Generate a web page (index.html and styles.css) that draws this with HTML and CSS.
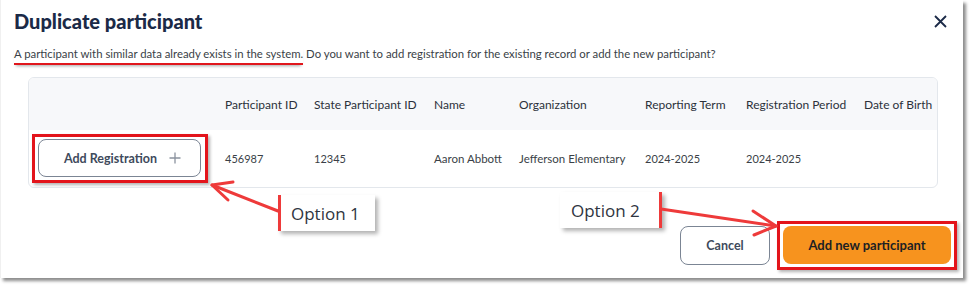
FILE: index.html
```html
<!DOCTYPE html>
<html lang="en">
<head>
  <meta charset="UTF-8" />
  <title>Duplicate participant</title>
  <link rel="stylesheet" href="styles.css">
</head>
<body>
  <div class="shot">
    <div class="dialog">
      <div class="dlg-head">
        <h1>Duplicate participant</h1>
        <button class="close" aria-label="Close">
          <svg width="13" height="13" viewBox="0 0 13 13"><path d="M1 1 L12 12 M12 1 L1 12" stroke="#1b2a47" stroke-width="1.8" fill="none"/></svg>
        </button>
      </div>
      <p class="msg"><span class="red-line">A participant with similar data already exists in the system.</span> Do you want to add registration for the existing record or add the new participant?</p>

      <div class="table-card">
        <table>
          <colgroup>
            <col class="c0"><col class="c1"><col class="c2"><col class="c3"><col class="c4"><col class="c5"><col class="c6"><col class="c7">
          </colgroup>
          <thead>
            <tr>
              <th></th>
              <th>Participant ID</th>
              <th>State Participant ID</th>
              <th>Name</th>
              <th>Organization</th>
              <th>Reporting Term</th>
              <th>Registration Period</th>
              <th>Date of Birth</th>
            </tr>
          </thead>
          <tbody>
            <tr>
              <td>
                <span class="mark-box">
                  <button class="btn btn-add">Add Registration
                    <svg class="plus" width="12" height="12" viewBox="0 0 12 12"><path d="M6 0.5 V11.5 M0.5 6 H11.5" stroke="#8a929e" stroke-width="1.3" fill="none"/></svg>
                  </button>
                </span>
              </td>
              <td class="num">456987</td>
              <td class="num">12345</td>
              <td>Aaron Abbott</td>
              <td>Jefferson Elementary</td>
              <td class="num">2024-2025</td>
              <td class="num">2024-2025</td>
              <td></td>
            </tr>
          </tbody>
        </table>
      </div>

      <div class="actions">
        <button class="btn btn-cancel">Cancel</button>
        <span class="mark-box mark-primary">
          <button class="btn btn-primary">Add new participant</button>
        </span>
      </div>
    </div>

    <div class="callout callout-1">Option 1</div>
    <div class="callout callout-2">Option 2</div>

    <svg class="arrows" width="972" height="287" viewBox="0 0 972 287">
      <g stroke="#ee3a3a" stroke-width="3" fill="none" stroke-linecap="round" stroke-linejoin="round">
        <path d="M278 211 L212 185"/>
        <path d="M233 182 L212 185 L228 200"/>
        <path d="M661 209 L776 226"/>
        <path d="M753 211 L776 226 L754 235"/>
      </g>
    </svg>
  </div>
</body>
</html>
```

FILE: styles.css
```css
* {
  box-sizing: border-box;
}

body {
  margin: 0;
  background: #fff;
  font-family: 'Lato', 'Open Sans', sans-serif;
  color: #333b47;
}

.shot {
  position: relative;
  width: 972px;
  height: 287px;
}

.dialog {
  width: 963px;
  height: 278px;
  padding: 0 12px 0 13px;
  background: #fff;
  border-left: 1px solid #f0f0f0;
  box-shadow: 3px 3px 3px rgba(0, 0, 0, 0.45);
  display: flex;
  flex-direction: column;
}

.dlg-head {
  display: flex;
  justify-content: space-between;
  align-items: center;
  height: 42px;
}

h1 {
  margin: 0;
  font-size: 20px;
  font-weight: 900;
  color: #1b2a47;
}

.close {
  background: none;
  border: none;
  padding: 0;
  margin-right: 4px;
  display: flex;
}

.msg {
  margin: 4px 0 0;
  font-size: 11.35px;
  line-height: 16px;
  color: #3a3f47;
}

.red-line {
  display: inline-block;
  border-bottom: 2px solid #e0161c;
  padding-bottom: 1px;
  box-shadow: 0 3px 3px -2px rgba(0, 0, 0, 0.35);
}

.table-card {
  margin: 12px 13px 0 14px;
  border: 1px solid #e3e7ec;
  border-radius: 6px;
  overflow: hidden;
}

table {
  width: 100%;
  border-collapse: collapse;
  table-layout: fixed;
  font-size: 11.5px;
}

.c0 { width: 186px; }
.c1 { width: 89px; }
.c2 { width: 120px; }
.c3 { width: 85px; }
.c4 { width: 126px; }
.c5 { width: 101px; }
.c6 { width: 118px; }

th {
  background: #f7f8fa;
  height: 52px;
  padding: 0 10px;
  text-align: left;
  font-size: 12px;
  font-weight: 400;
  color: #2c313a;
  white-space: nowrap;
}

td {
  height: 57px;
  padding: 0 10px;
  white-space: nowrap;
  color: #3a3f47;
}

td:first-child {
  padding-left: 3px;
}

.num {
  font-size: 11px;
}

.mark-box {
  display: inline-flex;
  border: 3px solid #e3141b;
  padding: 2px 4px 3px 3px;
  box-shadow: 2px 2px 3px rgba(0, 0, 0, 0.3);
  vertical-align: middle;
}

.btn {
  font-family: inherit;
  border-radius: 8px;
  cursor: pointer;
}

.btn-add {
  width: 163px;
  height: 38px;
  background: #fff;
  border: 1px solid #7b8594;
  color: #3e4a5c;
  font-size: 12.5px;
  font-weight: 700;
  display: flex;
  align-items: center;
  justify-content: center;
  gap: 12px;
  padding: 0 0 0 6px;
}

.actions {
  display: flex;
  justify-content: flex-end;
  align-items: center;
  gap: 7px;
  margin-top: 33px;
  margin-right: -6px;
}

.btn-cancel {
  width: 90px;
  height: 39px;
  background: #fff;
  border: 1px solid #7b8594;
  color: #3e4a5c;
  font-size: 12.5px;
  font-weight: 700;
}

.mark-primary {
  padding: 2px 3px 3px 3px;
}

.btn-primary {
  width: 168px;
  height: 38px;
  background: #f7931e;
  border: none;
  color: #1d1f24;
  font-size: 13px;
  font-weight: 700;
}

.callout {
  position: absolute;
  background: #fff;
  font-family: 'Open Sans', sans-serif;
  font-size: 17px;
  color: #2f3541;
  display: flex;
  align-items: center;
  box-shadow: 3px 3px 4px rgba(0, 0, 0, 0.3);
}

.callout-1 {
  left: 278px;
  top: 195px;
  width: 97px;
  height: 36px;
  padding-left: 10px;
  border-left: 3px solid #ee3a3a;
}

.callout-2 {
  left: 560px;
  top: 192px;
  width: 102px;
  height: 36px;
  padding-left: 11px;
  border-right: 3px solid #ee3a3a;
}

.arrows {
  position: absolute;
  left: 0;
  top: 0;
  pointer-events: none;
}
```
